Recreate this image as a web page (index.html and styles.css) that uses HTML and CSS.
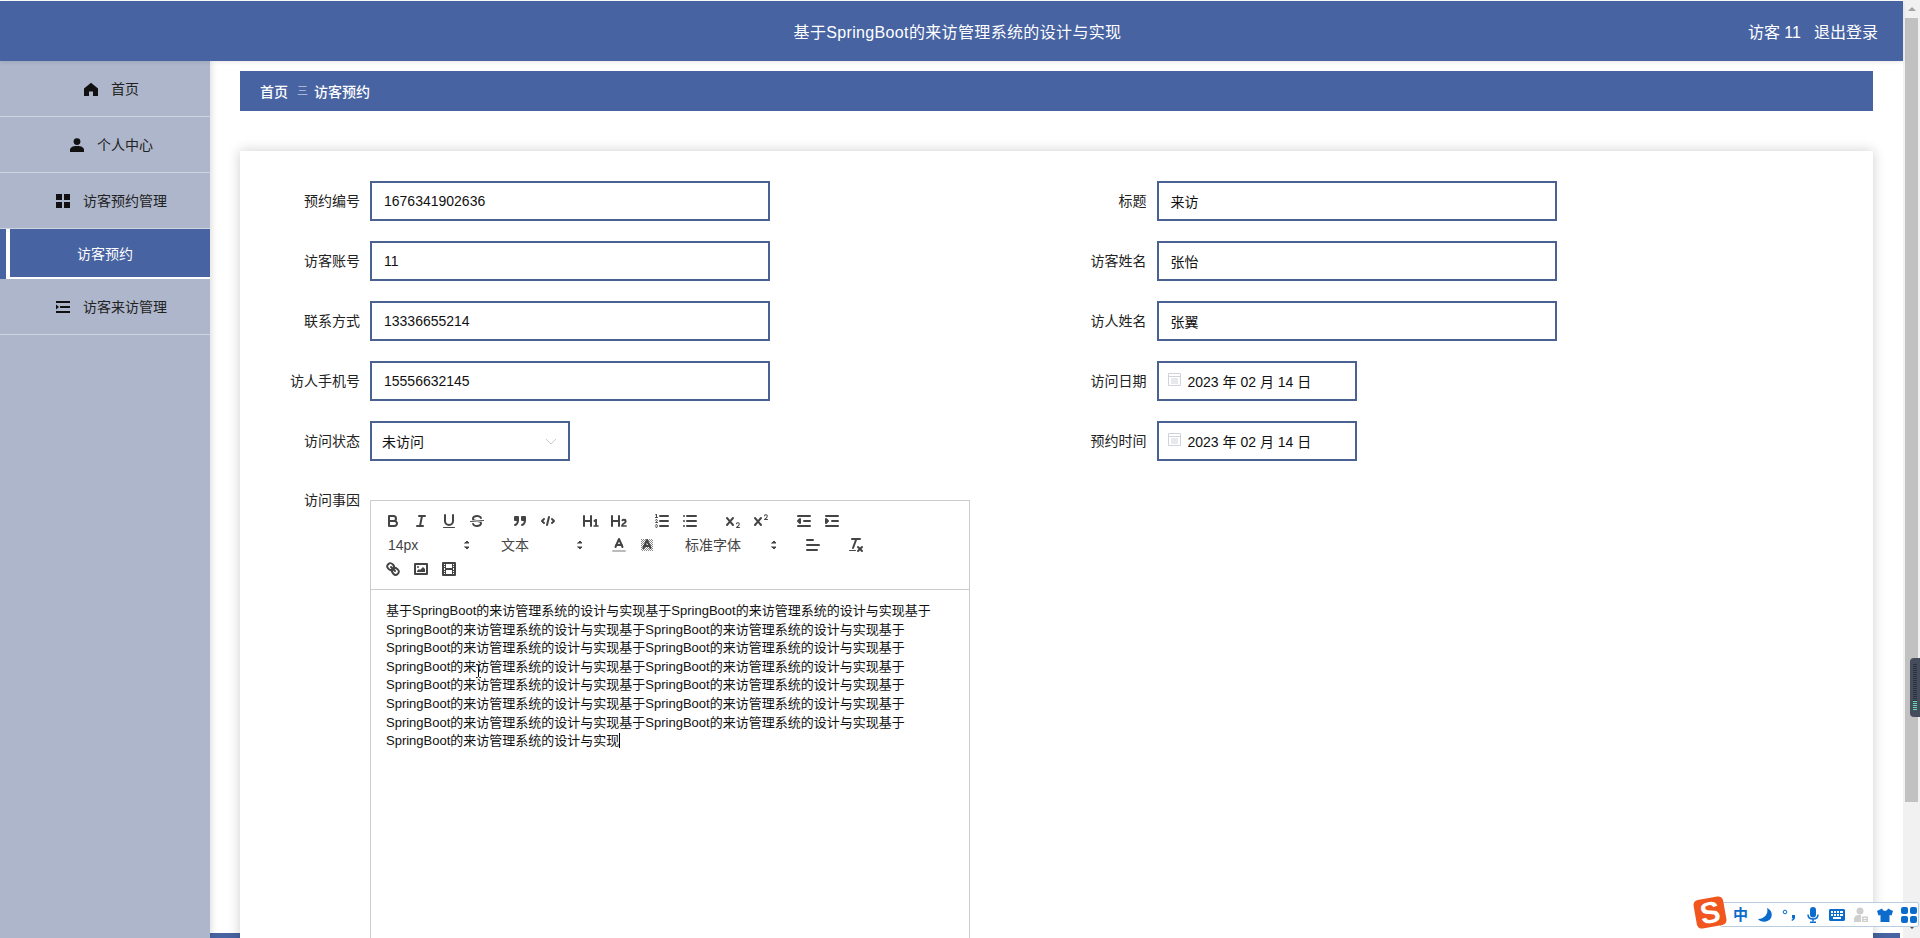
FILE: index.html

```html
<!DOCTYPE html>
<html lang="zh-CN">
<head>
  <meta charset="UTF-8" />
  <title>基于SpringBoot的来访管理系统的设计与实现</title>
  <meta name="viewport" content="width=device-width, initial-scale=1.0" />
  <link rel="stylesheet" href="styles.css">
</head>
<body>

<div class="page">
  <header class="topbar">
    <span class="topbar-title">基于SpringBoot的来访管理系统的设计与实现</span>
    <div class="topbar-user">
      <span>访客 11</span>
      <span>退出登录</span>
    </div>
  </header>

  <div class="layout">
    <aside class="sidebar">
      <div class="menu-item">
        <svg class="menu-icon" viewBox="0 0 14 14"><path d="M7 .8 14 6.6V14H9V9.4H5V14H0V6.6Z"/></svg>
        <span>首页</span>
      </div>
      <div class="menu-item">
        <svg class="menu-icon" viewBox="0 0 14 14"><circle cx="7" cy="3.6" r="3.4"/><path d="M0 14v-2.2C0 9.6 2.6 8 7 8s7 1.6 7 3.800V14Z"/></svg>
        <span>个人中心</span>
      </div>
      <div class="menu-item">
        <svg class="menu-icon" viewBox="0 0 14 14"><rect width="6" height="6"/><rect x="8" width="6" height="6"/><rect y="8" width="6" height="6"/><rect x="8" y="8" width="6" height="6"/></svg>
        <span>访客预约管理</span>
      </div>
      <div class="submenu-item">
        <span>访客预约</span>
      </div>
      <div class="menu-item">
        <svg class="menu-icon" viewBox="0 0 14 14"><rect y="1" width="14" height="2"/><rect x="4" y="6" width="10" height="2"/><rect y="11" width="14" height="2"/><path d="M0 4.500 3 7 0 9.500Z"/></svg>
        <span>访客来访管理</span>
      </div>
    </aside>

    <main class="content">
      <div class="footer-strip"></div>
      <div class="breadcrumb">
        <strong>首页</strong>
        <span class="breadcrumb-sep">三</span>
        <strong>访客预约</strong>
      </div>

      <section class="card">
        <div class="form-grid">
          <div class="form-row"><label>预约编号</label><div class="field">1676341902636</div></div>
          <div class="form-row"><label>标题</label><div class="field">来访</div></div>
          <div class="form-row"><label>访客账号</label><div class="field">11</div></div>
          <div class="form-row"><label>访客姓名</label><div class="field">张怡</div></div>
          <div class="form-row"><label>联系方式</label><div class="field">13336655214</div></div>
          <div class="form-row"><label>访人姓名</label><div class="field">张翼</div></div>
          <div class="form-row"><label>访人手机号</label><div class="field">15556632145</div></div>
          <div class="form-row">
            <label>访问日期</label>
            <div class="field field-date">
              <svg class="date-icon" viewBox="0 0 13 13"><path d="M.5 .5h12v12h-12ZM.5 3.500h12M3 6h7M3 8h7M3 10h7"/></svg>
              2023 年 02 月 14 日
            </div>
          </div>
          <div class="form-row">
            <label>访问状态</label>
            <div class="field field-select">
              未访问
              <svg class="select-arrow" viewBox="0 0 12 7"><path d="M1 1 6 6 11 1"/></svg>
            </div>
          </div>
          <div class="form-row">
            <label>预约时间</label>
            <div class="field field-date">
              <svg class="date-icon" viewBox="0 0 13 13"><path d="M.5 .5h12v12h-12ZM.5 3.500h12M3 6h7M3 8h7M3 10h7"/></svg>
              2023 年 02 月 14 日
            </div>
          </div>
        </div>

        <div class="editor-row">
          <label>访问事因</label>
          <div class="editor">
            <div class="toolbar">
              <span class="tool-group">
                <button class="tool"><svg viewBox="0 0 18 18"><path class="st" d="M5,4H9.500A2.500,2.500,0,0,1,12,6.500v0A2.500,2.500,0,0,1,9.500,9H5A0,0,0,0,1,5,9V4A0,0,0,0,1,5,4Z"/><path class="st" d="M5,9h5.500A2.500,2.500,0,0,1,13,11.500v0A2.500,2.500,0,0,1,10.500,14H5a0,0,0,0,1,0,0V9A0,0,0,0,1,5,9Z"/></svg></button>
                <button class="tool"><svg viewBox="0 0 18 18"><line class="st" x1="7" x2="13" y1="4" y2="4"/><line class="st" x1="5" x2="11" y1="14" y2="14"/><line class="st" x1="8" x2="10" y1="14" y2="4"/></svg></button>
                <button class="tool"><svg viewBox="0 0 18 18"><path class="st" d="M5,3V9a4,4,0,0,0,4,4H9a4,4,0,0,0,4-4V3"/><rect class="fl" x="3" y="15" width="12" height="1" rx="0.500"/></svg></button>
                <button class="tool"><svg viewBox="0 0 18 18"><line class="st thin" x1="15.500" x2="2.500" y1="8.500" y2="9.500"/><path class="fl" d="M9.007,8C6.542,7.791,6,7.519,6,6.500,6,5.792,7.283,5,9,5c1.571,0,2.765.679,2.969,1.309a1,1,0,0,0,1.900-.617C13.356,4.106,11.354,3,9,3,6.200,3,4,4.538,4,6.500a3.200,3.200,0,0,0,.500,1.843Z"/><path class="fl" d="M8.984,10C11.457,10.208,12,10.479,12,11.500c0,.708-1.283,1.500-3,1.500-1.571,0-2.765-.679-2.969-1.309a1,1,0,1,0-1.900.617C4.644,13.894,6.646,15,9,15c2.800,0,5-1.538,5-3.500a3.200,3.200,0,0,0-.500-1.843Z"/></svg></button>
              </span>
              <span class="tool-group">
                <button class="tool"><svg viewBox="0 0 18 18"><rect class="st fl" height="3" width="3" x="4" y="5"/><rect class="st fl" height="3" width="3" x="11" y="5"/><path class="st" d="M7,8c0,4.031-3,5-3,5"/><path class="st" d="M14,8c0,4.031-3,5-3,5"/></svg></button>
                <button class="tool"><svg viewBox="0 0 18 18"><polyline class="st" points="5 7 3 9 5 11"/><polyline class="st" points="13 7 15 9 13 11"/><line class="st" x1="10" x2="8" y1="5" y2="13"/></svg></button>
              </span>
              <span class="tool-group">
                <button class="tool"><svg viewBox="0 0 18 18"><path class="fl" d="M10,4V14a1,1,0,0,1-2,0V10H3v4a1,1,0,0,1-2,0V4A1,1,0,0,1,3,4V8H8V4a1,1,0,0,1,2,0Zm6.068,9.209H14.990V7.599a.541.541,0,0,0-.605-.605h-.627a1.011,1.011,0,0,0-.748.297L11.645,8.566a.544.544,0,0,0-.022.858l.286.308a.539.539,0,0,0,.847.033l.099-.088a1.214,1.214,0,0,0,.242-.353h.022s-.011.309-.011.605V13.209H12.041a.541.541,0,0,0-.605.605v.439a.541.541,0,0,0,.605.605h4.027a.541.541,0,0,0,.605-.605v-.439A.541.541,0,0,0,16.068,13.209Z"/></svg></button>
                <button class="tool"><svg viewBox="0 0 18 18"><path class="fl" d="M16.740,13.814v.439a.541.541,0,0,1-.605.605H11.855a.584.584,0,0,1-.649-.605V14.013c0-2.905,3.399-3.422,3.399-4.555a.777.777,0,0,0-.847-.781,1.177,1.177,0,0,0-.836.385c-.275.264-.561.374-.858.132l-.429-.341c-.308-.242-.385-.518-.154-.814a2.972,2.972,0,0,1,2.454-1.177,2.454,2.454,0,0,1,2.684,2.409c0,2.453-3.179,2.927-3.278,3.938h2.794A.541.541,0,0,1,16.740,13.814ZM9,3A1,1,0,0,0,8,4V8H3V4A1,1,0,0,0,1,4V14a1,1,0,0,0,2,0V10H8v4a1,1,0,0,0,2,0V4A1,1,0,0,0,9,3Z"/></svg></button>
              </span>
              <span class="tool-group">
                <button class="tool"><svg viewBox="0 0 18 18"><line class="st" x1="7" x2="15" y1="4" y2="4"/><line class="st" x1="7" x2="15" y1="9" y2="9"/><line class="st" x1="7" x2="15" y1="14" y2="14"/><line class="st thin" x1="2.500" x2="4.500" y1="5.500" y2="5.500"/><path class="fl" d="M3.500,6A.5,.5,0,0,1,3,5.500V3.085l-.276.138A.5,.5,0,0,1,2.053,3c-.124-.247-.023-.324.224-.447l1-.5A.5,.5,0,0,1,4,2.500v3A.5,.5,0,0,1,3.500,6Z"/><path class="st thin" d="M4.500,10.500h-2c0-.234,1.850-1.076,1.850-2.234A.959,.959,0,0,0,2.500,8.156"/><path class="st thin" d="M2.500,14.846a.959,.959,0,0,0,1.850-.109A.7,.7,0,0,0,3.750,14a.688,.688,0,0,0,.6-.736,.959,.959,0,0,0-1.850-.109"/></svg></button>
                <button class="tool"><svg viewBox="0 0 18 18"><line class="st" x1="6" x2="15" y1="4" y2="4"/><line class="st" x1="6" x2="15" y1="9" y2="9"/><line class="st" x1="6" x2="15" y1="14" y2="14"/><line class="st" x1="3" x2="3" y1="4" y2="4"/><line class="st" x1="3" x2="3" y1="9" y2="9"/><line class="st" x1="3" x2="3" y1="14" y2="14"/></svg></button>
              </span>
              <span class="tool-group">
                <button class="tool"><svg viewBox="0 0 18 18"><path class="fl" d="M15.500,15H13.861a3.858,3.858,0,0,0,1.914-2.975,1.800,1.800,0,0,0-1.600-1.751A1.921,1.921,0,0,0,12.021,11.700a.5,.5,0,1,0,.957.291.914,.914,0,0,1,1.053-.725.81,.81,0,0,1,.744.762c0,1.076-1.170,1.870-1.940,2.431A1.456,1.456,0,0,0,12,15.500a.5,.5,0,0,0,.5.5h3A.5,.5,0,0,0,15.500,15Z"/><path class="fl" d="M9.650,5.241a1,1,0,0,0-1.409.108L6,7.964,3.759,5.349A1,1,0,0,0,2.241,6.649L4.684,9.500,2.241,12.350A1,1,0,0,0,3.759,13.650L6,11.036,8.241,13.650a1,1,0,1,0,1.518-1.300L7.316,9.500,9.759,6.651A1,1,0,0,0,9.650,5.241Z"/></svg></button>
                <button class="tool"><svg viewBox="0 0 18 18"><path class="fl" d="M15.500,7H13.861a4.015,4.015,0,0,0,1.914-2.975,1.800,1.800,0,0,0-1.600-1.751A1.922,1.922,0,0,0,12.021,3.700a.5,.5,0,1,0,.957.291.917,.917,0,0,1,1.053-.725.81,.81,0,0,1,.744.762c0,1.077-1.164,1.925-1.934,2.486A1.423,1.423,0,0,0,12,7.500a.5,.5,0,0,0,.5.5h3A.5,.5,0,0,0,15.500,7Z"/><path class="fl" d="M9.651,5.241a1,1,0,0,0-1.410.108L6,7.964,3.759,5.349a1,1,0,1,0-1.519,1.300L4.683,9.500,2.241,12.350a1,1,0,1,0,1.519,1.300L6,11.036,8.241,13.650a1,1,0,0,0,1.519-1.300L7.317,9.500,9.759,6.651A1,1,0,0,0,9.651,5.241Z"/></svg></button>
              </span>
              <span class="tool-group">
                <button class="tool"><svg viewBox="0 0 18 18"><line class="st" x1="3" x2="15" y1="14" y2="14"/><line class="st" x1="3" x2="15" y1="4" y2="4"/><line class="st" x1="9" x2="15" y1="9" y2="9"/><polyline class="st fl" points="5 7 5 11 3 9 5 7"/></svg></button>
                <button class="tool"><svg viewBox="0 0 18 18"><line class="st" x1="3" x2="15" y1="14" y2="14"/><line class="st" x1="3" x2="15" y1="4" y2="4"/><line class="st" x1="9" x2="15" y1="9" y2="9"/><polyline class="st fl" points="3 7 3 11 5 9 3 7"/></svg></button>
              </span>

              <span class="tool-group">
                <span class="picker">14px<svg viewBox="0 0 18 18"><polygon class="st thin fl" points="7 11 9 13 11 11 7 11"/><polygon class="st thin fl" points="7 7 9 5 11 7 7 7"/></svg></span>
              </span>
              <span class="tool-group">
                <span class="picker">文本<svg viewBox="0 0 18 18"><polygon class="st thin fl" points="7 11 9 13 11 11 7 11"/><polygon class="st thin fl" points="7 7 9 5 11 7 7 7"/></svg></span>
              </span>
              <span class="tool-group">
                <button class="tool"><svg viewBox="0 0 18 18"><line class="label-line" x1="3" x2="15" y1="15" y2="15"/><polyline class="st" points="5.500 11 9 3 12.500 11"/><line class="st" x1="11.630" x2="6.380" y1="9" y2="9"/></svg></button>
                <button class="tool"><svg viewBox="0 0 18 18"><defs><pattern id="hatch" width="2" height="2" patternUnits="userSpaceOnUse"><rect width="1" height="1" fill="#888"/><rect x="1" y="1" width="1" height="1" fill="#888"/></pattern></defs><rect x="3" y="3" width="12" height="12" fill="url(#hatch)"/><polyline class="st" points="5.500 12 9 4 12.500 12"/><line class="st" x1="11.630" x2="6.380" y1="10" y2="10"/></svg></button>
              </span>
              <span class="tool-group">
                <span class="picker picker-font">标准字体<svg viewBox="0 0 18 18"><polygon class="st thin fl" points="7 11 9 13 11 11 7 11"/><polygon class="st thin fl" points="7 7 9 5 11 7 7 7"/></svg></span>
              </span>
              <span class="tool-group">
                <button class="tool"><svg viewBox="0 0 18 18"><line class="st" x1="3" x2="15" y1="9" y2="9"/><line class="st" x1="3" x2="13" y1="14" y2="14"/><line class="st" x1="3" x2="9" y1="4" y2="4"/></svg></button>
              </span>
              <span class="tool-group">
                <button class="tool"><svg viewBox="0 0 18 18"><line class="st" x1="5" x2="13" y1="3" y2="3"/><line class="st" x1="6" x2="9.350" y1="12" y2="3"/><line class="st" x1="11" x2="15" y1="11" y2="15"/><line class="st" x1="15" x2="11" y1="11" y2="15"/><rect class="fl" height="1" rx="0.500" ry="0.500" width="7" x="2" y="14"/></svg></button>
              </span>

              <span class="tool-group">
                <button class="tool"><svg viewBox="0 0 18 18"><line class="st" x1="7" x2="11" y1="7" y2="11"/><path class="st" d="M8.900,4.577a3.476,3.476,0,0,1,.36,4.679A3.476,3.476,0,0,1,4.577,8.900C3.185,7.500,2.035,6.400,4.217,4.217S7.500,3.185,8.900,4.577Z"/><path class="st" d="M13.423,9.100a3.476,3.476,0,0,0-4.679-.36,3.476,3.476,0,0,0,.36,4.679c1.392,1.392,2.500,2.542,4.679.36S14.815,10.500,13.423,9.100Z"/></svg></button>
                <button class="tool"><svg viewBox="0 0 18 18"><rect class="st" height="10" width="12" x="3" y="4"/><circle class="fl" cx="6" cy="7" r="1"/><polyline class="fl" points="5 12 5 11 7 9 8 10 11 7 13 9 13 12 5 12"/></svg></button>
                <button class="tool"><svg viewBox="0 0 18 18"><rect class="st" height="12" width="12" x="3" y="3"/><rect class="fl" height="12" width="1" x="5" y="3"/><rect class="fl" height="12" width="1" x="12" y="3"/><rect class="fl" height="2" width="8" x="5" y="8"/><rect class="fl" height="1" width="3" x="3" y="5"/><rect class="fl" height="1" width="3" x="3" y="7"/><rect class="fl" height="1" width="3" x="3" y="10"/><rect class="fl" height="1" width="3" x="3" y="12"/><rect class="fl" height="1" width="3" x="12" y="5"/><rect class="fl" height="1" width="3" x="12" y="7"/><rect class="fl" height="1" width="3" x="12" y="10"/><rect class="fl" height="1" width="3" x="12" y="12"/></svg></button>
              </span>
            </div>
            <div class="editor-body">基于SpringBoot的来访管理系统的设计与实现基于SpringBoot的来访管理系统的设计与实现基于SpringBoot的来访管理系统的设计与实现基于SpringBoot的来访管理系统的设计与实现基于SpringBoot的来访管理系统的设计与实现基于SpringBoot的来访管理系统的设计与实现基于SpringBoot的来访管理系统的设计与实现基于SpringBoot的来访管理系统的设计与实现基于SpringBoot的来访管理系统的设计与实现基于SpringBoot的来访管理系统的设计与实现基于SpringBoot的来访管理系统的设计与实现基于SpringBoot的来访管理系统的设计与实现基于SpringBoot的来访管理系统的设计与实现基于SpringBoot的来访管理系统的设计与实现基于SpringBoot的来访管理系统的设计与实现<span class="caret"></span></div>
            <svg class="ibeam" viewBox="0 0 7 14"><path d="M1 .5h1.500L3.500 1.500 4.500.5H6M3.500 1.500v11M1 13.500h1.500l1-1 1 1H6"/></svg>
          </div>
        </div>
      </section>
    </main>
  </div>
</div>

<div class="scrollbar">
  <span class="scroll-up"></span>
  <div class="scroll-thumb"></div>
  <span class="scroll-down"></span>
</div>

<div class="side-widget">
  <span class="ticks"></span>
  <span class="ticks ticks-on"></span>
</div>

<div class="ime-bar">
  <div class="ime-logo">S</div>
  <span class="ime-zh">中</span>
  <svg class="ime-icon" viewBox="0 0 16 16"><path d="M10 1C12 7 7 12 1 12c2.500 3.500 10 4 13-1 2-4 0-8.500-4-10Z"/></svg>
  <svg class="ime-icon" viewBox="0 0 16 16"><circle class="ime-ring" cx="4" cy="5" r="1.800"/><path d="M11 8h3v2.500c0 1.500-1 2.800-3 3.500l-.5-1c.8-.4 1.300-1 1.300-1.700H11Z"/></svg>
  <svg class="ime-icon" viewBox="0 0 16 16"><rect x="5" y="0" width="6" height="10.500" rx="3"/><path class="ime-line" d="M3 7.500c0 3 2 4.500 5 4.500s5-1.500 5-4.500M8 12v2.500"/><rect x="5" y="14.500" width="6" height="1.500"/></svg>
  <svg class="ime-icon" viewBox="0 0 16 16"><path fill-rule="evenodd" d="M1.500 2h13c.8 0 1.500.7 1.500 1.500v9c0 .8-.7 1.500-1.500 1.500h-13C.7 14 0 13.300 0 12.500v-9C0 2.700.7 2 1.500 2ZM2 4v2h2V4Zm3 0v2h2V4Zm3 0v2h2V4Zm3 0v2h3V4ZM2 7v2h2V7Zm3 0v2h2V7Zm3 0v2h2V7Zm3 0v2h3V7ZM4 10v2h8v-2Z"/></svg>
  <svg class="ime-icon ime-gray" viewBox="0 0 16 16"><circle cx="7" cy="4" r="3.500"/><path d="M1 15v-3c0-2.500 2-4 5-4h2v7Z"/><path fill-rule="evenodd" d="M9 9.500h6V15H9Zm1.500 1.500v1h3v-1Zm0 2v.7h3V13Z"/></svg>
  <svg class="ime-icon" viewBox="0 0 16 16"><path d="M5 1.500 0 4l1.500 4.500L3.500 8v7h9V8l2 .5L16 4l-5-2.500C10.500 3 9.500 3.800 8 3.800S5.500 3 5 1.500Z"/></svg>
  <svg class="ime-icon" viewBox="0 0 16 16"><rect width="7" height="7" rx="2"/><rect x="9" width="7" height="7" rx="2"/><rect y="9" width="7" height="7" rx="2"/><rect x="9" y="9" width="7" height="7" rx="2"/></svg>
</div>

</body>
</html>
```

FILE: styles.css

```css
html, body {
  height: 100%;
}

body {
  margin: 0;
  display: flex;
  overflow: hidden;
  background-color: #fff;
  color: #222;
  font-family: "Liberation Sans", "Noto Sans CJK SC", sans-serif;
  font-size: 14px;
}

.page {
  flex: 1;
  min-width: 0;
  height: 100%;
  padding-top: 1px;
  box-sizing: border-box;
  display: flex;
  flex-direction: column;
}

.topbar {
  position: relative;
  z-index: 3;
  height: 60px;
  flex-shrink: 0;
  background-color: #4763a1;
  box-shadow: 0 1px 4px rgba(0,0,0,0.1);
  color: #fff;
  display: flex;
  justify-content: center;
  align-items: center;
  font-size: 16px;
}

.topbar-title {
  margin-left: 12px;
  letter-spacing: 0.35px;
}

.topbar-user {
  position: absolute;
  right: 25px;
  top: 0;
  height: 60px;
  display: flex;
  align-items: center;
  gap: 13px;
}

.layout {
  flex: 1;
  min-height: 0;
  display: flex;
}

.sidebar {
  position: relative;
  z-index: 2;
  width: 210px;
  flex-shrink: 0;
  background-color: #adb6ca;
  box-shadow: 2px 0 6px rgba(0,0,0,0.12);
}

.menu-item {
  height: 55px;
  border-bottom: 1px solid #cdd3e0;
  padding-left: 13px;
  display: flex;
  justify-content: center;
  align-items: center;
  gap: 13px;
}

.menu-item span {
  margin-top: -1px;
}

.menu-icon {
  width: 14px;
  height: 14px;
  fill: #111;
}

.submenu-item {
  height: 48px;
  margin-left: 6px;
  border-left: 4px solid #fff;
  border-bottom: 2px solid #fff;
  background-color: #4763a1;
  box-shadow: -6px 0 0 #4763a1;
  color: #fff;
  display: flex;
  justify-content: center;
  align-items: center;
  padding-right: 10px;
}

.content {
  position: relative;
  flex: 1;
  min-width: 0;
  padding: 10px 30px 0;
  overflow: hidden;
}

.footer-strip {
  position: absolute;
  left: 0;
  right: 3px;
  bottom: 0;
  height: 5px;
  background-color: #4763a1;
}

.breadcrumb {
  height: 39px;
  padding: 0 0 1px 20px;
  background-color: #4763a1;
  color: #fff;
  display: flex;
  align-items: center;
  gap: 9px;
}

.breadcrumb strong {
  font-weight: 500;
}

.breadcrumb-sep {
  width: 8px;
  font-size: 11px;
  font-weight: 300;
  line-height: 12px;
  text-align: center;
  opacity: 0.9;
}

.card {
  position: relative;
  height: 900px;
  margin-top: 40px;
  padding: 30px;
  background-color: #fff;
  box-shadow: 0 0 12px rgba(0,0,0,0.2);
}

.form-grid {
  display: grid;
  grid-template-columns: 1fr 1fr;
  row-gap: 20px;
}

.form-row, .editor-row {
  display: flex;
  gap: 10px;
}

.form-row label, .editor-row label {
  width: 90px;
  flex-shrink: 0;
  text-align: right;
  line-height: 40px;
  color: #222;
}

.editor-row label {
  line-height: 38px;
}

.field {
  width: 400px;
  height: 40px;
  box-sizing: border-box;
  border: 2px solid #4a6291;
  padding-left: 12px;
  display: flex;
  align-items: center;
  color: #111;
}

.field-date {
  width: 200px;
  padding-left: 9px;
  gap: 7px;
}

.date-icon {
  width: 13px;
  height: 13px;
  margin-top: -3px;
  fill: none;
  stroke: #d0d3d9;
}

.field-select {
  position: relative;
  width: 200px;
  padding-left: 10px;
}

.select-arrow {
  position: absolute;
  right: 11px;
  top: 15px;
  width: 12px;
  height: 7px;
  fill: none;
  stroke: #c9ccd2;
}

.editor-row {
  margin-top: 20px;
}

.editor {
  position: relative;
  width: 600px;
  height: 600px;
  margin-top: 19px;
  box-sizing: border-box;
  border: 1px solid #ccc;
  display: flex;
  flex-direction: column;
}

.toolbar {
  padding: 8px;
  border-bottom: 1px solid #ccc;
  display: flex;
  flex-wrap: wrap;
}

.tool-group {
  display: flex;
  margin-right: 15px;
}

.tool {
  width: 28px;
  height: 24px;
  padding: 3px 5px;
  border: none;
  background: none;
}

.tool svg {
  display: block;
  width: 18px;
  height: 18px;
}

.st {
  fill: none;
  stroke: #444;
  stroke-width: 2;
  stroke-linecap: round;
  stroke-linejoin: round;
}

.thin {
  stroke-width: 1;
}

.fl {
  fill: #444;
}

.label-line {
  stroke: #bbb;
  stroke-width: 2;
  stroke-linecap: round;
}

.picker {
  position: relative;
  width: 98px;
  height: 24px;
  padding-left: 9px;
  box-sizing: border-box;
  color: #444;
  font-size: 14px;
  line-height: 24px;
}

.picker-font {
  width: 108px;
}

.picker svg {
  position: absolute;
  right: 1px;
  top: 3px;
  width: 18px;
  height: 18px;
}

.editor-body {
  padding: 12px 15px;
  font-size: 13px;
  line-height: 18.6px;
  color: #111;
}

.caret {
  display: inline-block;
  width: 1px;
  height: 15px;
  vertical-align: -3px;
  background-color: #000;
}

.ibeam {
  position: absolute;
  left: 104px;
  top: 163px;
  width: 7px;
  height: 14px;
  fill: none;
  stroke: #111;
}

.scrollbar {
  width: 17px;
  height: 100%;
  flex-shrink: 0;
  background-color: #f1f1f1;
  display: flex;
  flex-direction: column;
  align-items: center;
}

.scroll-up, .scroll-down {
  width: 0;
  height: 0;
  border-left: 4px solid transparent;
  border-right: 4px solid transparent;
}

.scroll-up {
  margin: 7px 0 7px;
  border-bottom: 4px solid #a3a3a3;
}

.scroll-down {
  margin-top: 123px;
  border-top: 4px solid #505050;
}

.scroll-thumb {
  width: 13px;
  height: 784px;
  background-color: #c1c1c1;
}

.side-widget {
  position: absolute;
  right: 0;
  top: 658px;
  width: 10px;
  height: 59px;
  box-sizing: border-box;
  padding: 6px 0 6px 3px;
  border-radius: 4px 0 0 4px;
  background-color: #454c5c;
  display: flex;
  flex-direction: column;
}

.ticks {
  flex: 1;
  width: 4px;
  background: repeating-linear-gradient(#2c313c 0 1px, #454c5c 1px 2px);
}

.ticks-on {
  flex: none;
  height: 10px;
  background: repeating-linear-gradient(#62dca8 0 1px, #454c5c 1px 2px);
}

.ime-bar {
  position: absolute;
  right: 1px;
  top: 902px;
  width: 199px;
  height: 25px;
  box-sizing: border-box;
  border: 1px solid #b9cde0;
  border-radius: 2px;
  padding-left: 12px;
  background-color: #fff;
  display: flex;
  align-items: center;
  gap: 8px;
}

.ime-logo {
  position: absolute;
  left: -26px;
  top: -5px;
  width: 30px;
  height: 29px;
  border-radius: 5px;
  background-color: #f0561d;
  color: #fff;
  font-size: 30px;
  font-weight: bold;
  line-height: 29px;
  text-align: center;
  transform: rotate(-10deg);
}

.ime-zh {
  width: 16px;
  color: #0b6ccc;
  font-size: 15px;
  font-weight: bold;
  line-height: 16px;
}

.ime-icon {
  width: 16px;
  height: 16px;
  flex-shrink: 0;
  fill: #0b6ccc;
}

.ime-gray {
  fill: #cfcfcf;
}

.ime-ring {
  fill: none;
  stroke: #0b6ccc;
}

.ime-line {
  fill: none;
  stroke: #0b6ccc;
  stroke-width: 1.500;
}
```
